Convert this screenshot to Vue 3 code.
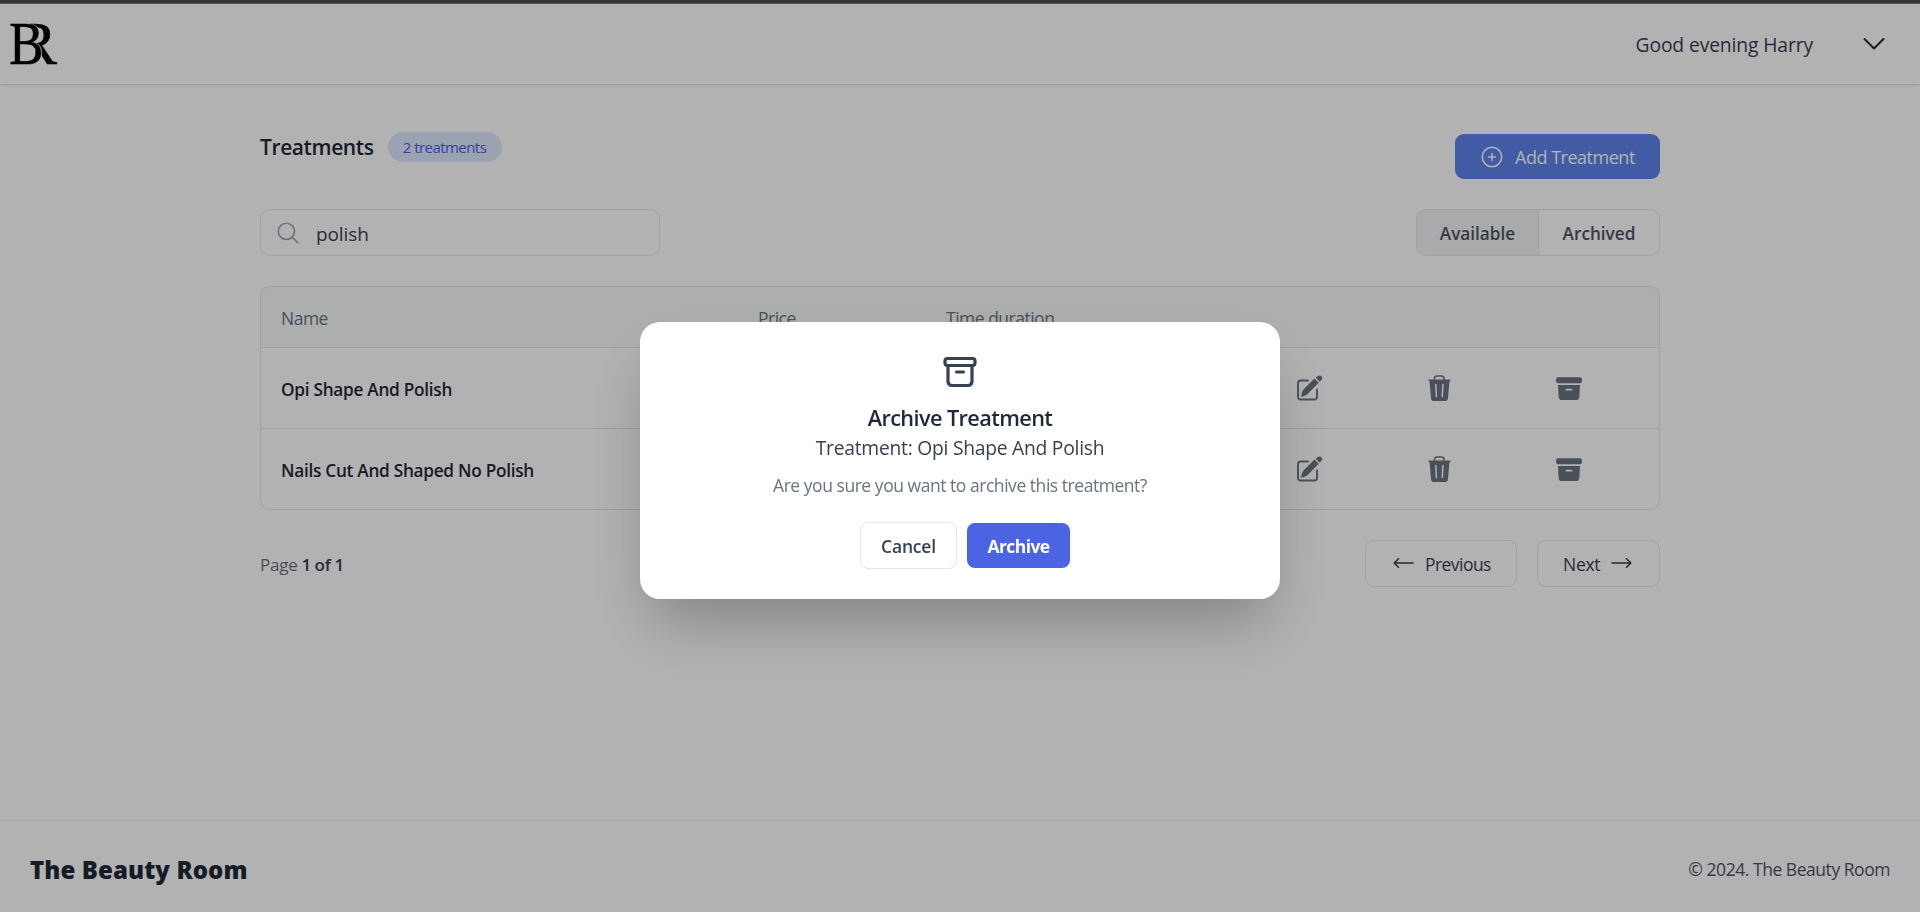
<script setup>
import { ref } from 'vue'

const query = ref('polish')
const treatments = [
  { id: 1, name: 'Opi Shape And Polish' },
  { id: 2, name: 'Nails Cut And Shaped No Polish' },
]
</script>

<template>
  <div class="page">
    <div class="topline"></div>
    <header class="nav">
      <svg class="logo" width="52" height="80" viewBox="0 -17 52 80">
        <defs>
          <clipPath id="legClip"><path d="M22 -10H52V56H27V10H22Z" /></clipPath>
        </defs>
        <g clip-path="url(#legClip)">
          <text class="letter" transform="translate(8.300 42.500)">R</text>
        </g>
        <text class="letter front" transform="translate(1.300 42.500) scale(.84 1)">B</text>
      </svg>
      <div class="user">
        <span class="greeting">Good evening Harry</span>
        <svg width="22" height="14" viewBox="0 0 22 14" fill="none" stroke="#1f2937" stroke-width="2" stroke-linecap="round" stroke-linejoin="round">
          <path d="M1.500 2 11 11.500 20.500 2" />
        </svg>
      </div>
    </header>

    <main class="content">
      <div class="heading">
        <div class="title-group">
          <h1>Treatments</h1>
          <span class="badge">2 treatments</span>
        </div>
        <button class="add">
          <svg width="22" height="22" viewBox="0 0 22 22" fill="none" stroke="currentColor" stroke-width="1.500" stroke-linecap="round">
            <circle cx="11" cy="11" r="9.700" />
            <path d="M11 7.500v7M7.500 11h7" />
          </svg>
          <span>Add Treatment</span>
        </button>
      </div>

      <div class="filters">
        <label class="search">
          <svg width="26" height="26" viewBox="0 0 24 24" fill="none" stroke="#9ca3af" stroke-width="1.500" stroke-linecap="round">
            <path d="m21 21-5.197-5.197m0 0A7.500 7.500 0 1 0 5.196 5.196a7.500 7.500 0 0 0 10.607 10.607Z" />
          </svg>
          <span>{{ query }}</span>
        </label>
        <div class="toggle">
          <button class="active">Available</button>
          <button>Archived</button>
        </div>
      </div>

      <section class="table">
        <div class="row head">
          <span>Name</span><span>Price</span><span>Time duration</span>
        </div>
        <div v-for="t in treatments" :key="t.id" class="row">
          <span class="name">{{ t.name }}</span><span></span><span></span>
          <svg class="icon" width="26" height="27" viewBox="0 0 26 27">
            <path d="M11 5.500H3.500A2.500 2.500 0 0 0 1 8v14a2.500 2.500 0 0 0 2.500 2.500h14A2.500 2.500 0 0 0 20 22v-7.500" fill="none" stroke="currentColor" stroke-width="1.900" stroke-linecap="round" />
            <path d="M17.400 3.500 21.700 7.800 10.300 19.200Q7 21.400 4 21.800 4.300 18 6.500 14.400Z" fill="currentColor" />
            <path d="M18.700 2.700Q21.300-.5 24.200.9 27 3.500 22.700 6.700Z" fill="currentColor" />
          </svg>
          <svg class="icon" width="23" height="27" viewBox="0 0 23 27">
            <path d="M6.500 5V3.400Q6.500.9 9 .9h4.500q2.500 0 2.500 2.500V5" fill="none" stroke="currentColor" stroke-width="1.500" />
            <path d="M.8 4.600h21.400q.8.800 0 1.600h-.8L20 23.200Q19.700 26 17 26H6Q3.300 26 3 23.200L1.600 6.200H.8Q0 5.400.8 4.600Z" fill="currentColor" />
            <path d="M7.800 9.500 8.400 21.500M14.900 9.500 14.300 21.500" stroke="#fff" stroke-width="1.500" stroke-linecap="round" />
          </svg>
          <svg class="icon" width="26" height="27" viewBox="0 0 26 27">
            <rect y="2.300" width="26" height="6" rx="2.400" fill="currentColor" />
            <path d="M2 10h22l-.7 12.200Q23.100 25 20.300 25H5.700Q2.900 25 2.700 22.200Z" fill="currentColor" />
            <path d="M10.500 14.700h5" stroke="#fff" stroke-width="1.800" stroke-linecap="round" />
          </svg>
        </div>
      </section>

      <div class="pager">
        <p>Page <b>1 of 1</b></p>
        <div class="pager-buttons">
          <button class="prev">
            <svg width="22" height="12" viewBox="0 0 22 12" fill="none" stroke="currentColor" stroke-width="1.600" stroke-linecap="round" stroke-linejoin="round">
              <path d="M6.500 1.800 2.200 6l4.300 4.200M2.200 6H21" />
            </svg>
            <span>Previous</span>
          </button>
          <button class="next">
            <span>Next</span>
            <svg width="22" height="12" viewBox="0 0 22 12" fill="none" stroke="currentColor" stroke-width="1.600" stroke-linecap="round" stroke-linejoin="round">
              <path d="M15.500 1.800 19.800 6l-4.300 4.200M19.800 6H1" />
            </svg>
          </button>
        </div>
      </div>
    </main>

    <footer class="footer">
      <span class="brand">The Beauty Room</span>
      <span class="copy">© 2024. The Beauty Room</span>
    </footer>
  </div>

  <div class="overlay">
    <div class="modal">
      <svg class="modal-icon" width="40" height="40" viewBox="0 0 40 40" fill="none" stroke="#374151" stroke-width="3.200" stroke-linecap="round" stroke-linejoin="round">
        <rect x="5" y="6.500" width="30" height="7" rx="2.500" />
        <path d="M8 13.500V29.500a4 4 0 0 0 4 4h16a4 4 0 0 0 4-4V13.500M16.500 20h7" />
      </svg>
      <h2>Archive Treatment</h2>
      <p class="subject">Treatment: Opi Shape And Polish</p>
      <p class="question">Are you sure you want to archive this treatment?</p>
      <div class="actions">
        <button class="cancel">Cancel</button>
        <button class="confirm">Archive</button>
      </div>
    </div>
  </div>
</template>

<style>
body { background: #fff; }
</style>

<style scoped>
.page, .overlay {
  font-family: "Open Sans", "Noto Sans", sans-serif;
  font-size: 17.5px;
  color: #374151;
}
.page {
  height: 912px;
  display: flex;
  flex-direction: column;
  overflow: hidden;
  background: #fff;
}
*, *::before, *::after { box-sizing: border-box; }
h1, h2, p { margin: 0; }
button {
  font: inherit;
  color: inherit;
  border: 0;
  padding: 0;
  background: none;
  white-space: nowrap;
  display: flex;
  align-items: center;
}
svg { display: block; flex: none; }

.topline {
  height: 4px;
  flex: none;
  background: #4d4d4d;
  border-bottom: 1px solid #808080;
}
.nav {
  height: 80px;
  flex: none;
  display: flex;
  align-items: center;
  justify-content: space-between;
  padding: 0 35px 0 8px;
  box-shadow: 0 1px 3px rgba(0, 0, 0, .1), 0 1px 2px rgba(0, 0, 0, .06);
}
.logo { overflow: visible; }
.letter {
  font-family: "Liberation Serif", serif;
  font-size: 61px;
  fill: #000;
  stroke: #000;
  stroke-width: .6px;
}
.front { filter: drop-shadow(1px 0 0 #fff); }
.user { display: flex; align-items: center; gap: 50px; }
.greeting { font-size: 19.3px; line-height: 26px; padding-top: 1px; letter-spacing: -.12px; }

.content {
  width: 1400px;
  margin: 0 auto;
  padding-top: 48px;
  flex: 1;
}
.heading {
  display: flex;
  justify-content: space-between;
  align-items: flex-start;
  height: 77px;
}
.title-group { display: flex; align-items: center; gap: 14px; }
h1 {
  font-size: 21px;
  line-height: 30px;
  font-weight: 600;
  letter-spacing: -.4px;
  color: #1f2937;
}
.badge {
  height: 30px;
  width: 114px;
  line-height: 30px;
  border-radius: 15px;
  background: #dfeaff;
  color: #4f5fe6;
  font-size: 15px;
  letter-spacing: -.55px;
  text-align: center;
}
.add {
  margin-top: 2px;
  width: 205px;
  height: 45px;
  padding-left: 26px;
  gap: 12px;
  border-radius: 9px;
  background: #5e83eb;
  color: #fff;
  font-size: 18px;
  letter-spacing: -.48px;
}
.add span { padding-top: 1px; }
.filters { display: flex; justify-content: space-between; }
.search {
  width: 400px;
  height: 47px;
  border: 1px solid #e5e7eb;
  border-radius: 10px;
  display: flex;
  align-items: center;
  padding-left: 13.5px;
  gap: 15.5px;
  font-size: 19px;
  letter-spacing: -.1px;
}
.search span { padding-top: 2px; }
.toggle {
  display: flex;
  height: 47px;
  width: 244px;
  border: 1px solid #e5e7eb;
  border-radius: 10px;
  overflow: hidden;
  font-size: 17.2px;
  font-weight: 600;
  letter-spacing: -.6px;
  color: #4b5563;
}
.toggle button { flex: 1; justify-content: center; padding-top: 1px; }
.toggle .active {
  flex: 0 0 122px;
  background: #f3f4f6;
  border-right: 1px solid #e5e7eb;
}

.table {
  margin-top: 30px;
  border: 1px solid #e5e7eb;
  border-radius: 10px;
  overflow: hidden;
}
.row {
  display: grid;
  grid-template-columns: 477px 188px 351px 131px 128px auto;
  align-items: center;
  height: 81px;
  padding: 1px 0 0 20px;
  border-top: 1px solid #e5e7eb;
}
.head {
  height: 60px;
  padding-top: 2px;
  border-top: 0;
  background: #f8fbfa;
  color: #6b7280;
  letter-spacing: -.5px;
}
.name {
  font-size: 17.2px;
  font-weight: 600;
  letter-spacing: -.26px;
  color: #1f2937;
  padding-top: 1px;
}
.icon { color: #6b7280; margin-top: -1px; }

.pager {
  margin-top: 30px;
  display: flex;
  justify-content: space-between;
  align-items: center;
  height: 47px;
}
.pager p { color: #6b7280; padding-top: 1px; font-size: 17px; letter-spacing: -.2px; word-spacing: -.5px; }
.pager b { font-weight: 600; color: #374151; }
.pager-buttons { display: flex; gap: 20px; }
.pager-buttons button {
  height: 47px;
  border: 1px solid #e5e7eb;
  border-radius: 9px;
  gap: 11px;
}
.pager-buttons svg { margin-bottom: 1px; }
.pager-buttons span { padding-top: 1px; }
.prev { width: 152px; padding-left: 26px; letter-spacing: -.55px; }
.next { width: 123px; padding-left: 25px; letter-spacing: -.3px; }

.footer {
  height: 92px;
  flex: none;
  display: flex;
  align-items: center;
  justify-content: space-between;
  padding: 6px 30px 0;
  border-top: 1px solid #f6f7f8;
}
.brand { font-size: 24px; font-weight: 800; letter-spacing: .1px; color: #1f2937; }
.copy { letter-spacing: -.46px; color: #4b5563; margin-top: -1px; }

.overlay {
  position: fixed;
  inset: 0;
  background: rgba(0, 0, 0, .3);
  display: flex;
  justify-content: center;
  align-items: flex-start;
  padding-top: 322px;
}
.modal {
  width: 640px;
  height: 277px;
  padding-top: 30px;
  border-radius: 20px;
  background: #fff;
  box-shadow: 0 32px 64px -12px rgba(0, 0, 0, .28);
  display: flex;
  flex-direction: column;
  align-items: center;
}
h2 {
  margin-top: 9px;
  font-size: 21.7px;
  line-height: 34px;
  font-weight: 600;
  letter-spacing: -.6px;
  color: #1f2937;
}
.subject { font-size: 19.3px; line-height: 26px; letter-spacing: -.26px; }
.question { margin-top: 10px; line-height: 28px; letter-spacing: -.46px; color: #6b7280; }
.actions {
  margin-top: 23px;
  padding-left: 10px;
  display: flex;
  align-items: center;
  gap: 10px;
}
.actions button { justify-content: center; border-radius: 8px; padding-top: 1px; }
.cancel {
  width: 97px;
  height: 47px;
  border: 1px solid #e5e7eb;
  font-weight: 600;
  letter-spacing: -.2px;
}
.confirm {
  width: 103px;
  height: 45px;
  background: #4b64e3;
  color: #fff;
  font-weight: 700;
  letter-spacing: -.6px;
}
</style>
